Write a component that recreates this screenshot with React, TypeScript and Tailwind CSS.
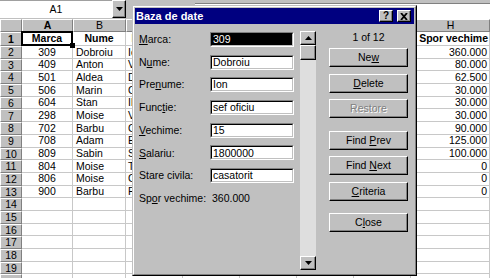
import React from 'react';

const rows = [
  ['309', 'Dobroiu', 'Ion', '360.000'],
  ['409', 'Anton', 'Vasile', '80.000'],
  ['501', 'Aldea', 'Dan', '62.500'],
  ['506', 'Marin', 'Constantin', '30.000'],
  ['604', 'Stan', 'Ilie', '30.000'],
  ['298', 'Moise', 'Victor', '30.000'],
  ['702', 'Barbu', 'Costel', '90.000'],
  ['708', 'Adam', 'Elena', '125.000'],
  ['809', 'Sabin', 'Sorin', '100.000'],
  ['804', 'Moise', 'Toma', '0'],
  ['806', 'Moise', 'Cristian', '0'],
  ['900', 'Barbu', 'Florin', '0'],
];

const font = "font-['Liberation_Sans',Arial,sans-serif]";
const hdr = 'flex items-center justify-center bg-[#c0c0c0] border-t border-l border-r border-b border-t-white border-l-white border-r-[#808080] border-b-[#808080] overflow-hidden';
const cell = 'flex items-center bg-white border-r border-b border-[#c8c8c8] overflow-hidden whitespace-nowrap';
const raised = 'border border-t-white border-l-white border-r-black border-b-black bg-[#c0c0c0] shadow-[inset_-1px_-1px_0_#808080]';

const Tri = ({ down }: { down?: boolean }) => (
  <svg width="7" height="4" viewBox="0 0 7 4">
    <polygon points={down ? '0,0 7,0 3.5,4' : '0,4 7,4 3.5,0'} fill="#000" />
  </svg>
);

const U = ({ c }: { c: string }) => <span className="underline underline-offset-[1px]">{c}</span>;

const Btn = ({ children, dim, className = '' }: { children: React.ReactNode; dim?: boolean; className?: string }) => (
  <div className={`flex h-[19px] w-full items-center justify-center ${raised} ${className} ${dim ? 'text-[#808080] [text-shadow:1px_1px_0_#fff]' : 'text-black'}`}>
    <span className="whitespace-pre">{children}</span>
  </div>
);

const fields: [React.ReactNode, string][] = [
  [<><U c="M" />arca:</>, '309'],
  [<>N<U c="u" />me:</>, 'Dobroiu'],
  [<>Pre<U c="n" />ume:</>, 'Ion'],
  [<>Func<U c="t" />ie:</>, 'sef oficiu'],
  [<><U c="V" />echime:</>, '15'],
  [<><U c="S" />alariu:</>, '1800000'],
  [<>Stare civila:</>, 'casatorit'],
];

function Grid() {
  const cols = 'grid grid-cols-[22px_51px_53px_57px_57px_57px_57px_57px_79px]';
  const letters = ['A', 'B', 'C', 'D', 'E', 'F', 'G', 'H'];
  return (
    <div className="flex flex-col">
      <div className={`${cols} h-[13px]`}>
        <div className={hdr} />
        {letters.map((l) => (
          <div key={l} className={`${hdr} ${l === 'A' ? 'font-bold' : ''}`}>{l}</div>
        ))}
      </div>
      <div className={`${cols} h-[14px] font-bold`}>
        <div className={`${hdr} font-bold`}>1</div>
        <div className="relative flex items-center justify-center bg-white border-r border-b border-[#c8c8c8]">
          Marca
          <div className="absolute inset-[-1px] border-2 border-black" />
          <div className="absolute right-[-3px] bottom-[-3px] h-[5px] w-[5px] bg-black" />
        </div>
        <div className={`${cell} justify-center`}>Nume</div>
        <div className={`${cell} justify-center`}>Prenume</div>
        <div className={cell} />
        <div className={cell} />
        <div className={cell} />
        <div className={cell} />
        <div className={`${cell} justify-end pr-[1px] overflow-visible`}>Spor vechime</div>
      </div>
      {Array.from({ length: 19 }).map((_, i) => {
        const r = rows[i];
        return (
          <div key={i} className={`${cols} h-[12.7px]`}>
            <div className={hdr}>{i < 18 ? i + 2 : ''}</div>
            <div className={`${cell} justify-center`}>{r?.[0]}</div>
            <div className={`${cell} pl-[3px]`}>{r?.[1]}</div>
            <div className={`${cell} pl-[2px]`}>{r?.[2]}</div>
            <div className={cell} />
            <div className={cell} />
            <div className={cell} />
            <div className={cell} />
            <div className={`${cell} justify-end pr-[2px]`}>{r?.[3]}</div>
          </div>
        );
      })}
    </div>
  );
}

function Dialog() {
  return (
    <div className="absolute left-[132px] top-[5px] h-[271px] w-[285px] border border-t-[#c0c0c0] border-l-[#c0c0c0] border-r-black border-b-black bg-[#c0c0c0]">
      <div className="h-full border border-t-white border-l-white border-r-[#808080] border-b-[#808080] p-px">
        <div className="flex h-[16px] items-center justify-between bg-[#000080] pl-[1px] pr-[3px]">
          <span className="text-[11px] font-bold text-white">Baza de date</span>
          <div className="flex gap-[4px]">
            <div className={`flex h-[12px] w-[14px] items-center justify-center text-[10px] font-bold leading-none ${raised}`}>?</div>
            <div className={`flex h-[12px] w-[14px] items-center justify-center ${raised}`}>
              <svg width="8" height="7" viewBox="0 0 8 7">
                <path d="M1 0 L7 7 M7 0 L1 7" stroke="#000" strokeWidth="1.8" />
              </svg>
            </div>
          </div>
        </div>
        <div className="flex items-start pl-[4px] pt-[4px]">
          <div className="flex w-[155px] flex-col">
            {fields.map(([label, val], i) => (
              <div key={i} className="flex h-[22.7px] items-center">
                <div className="w-[71px]">{label}</div>
                <div className="h-[15px] w-[84px] border border-t-[#808080] border-l-[#808080] border-r-white border-b-white">
                  <div className={`flex h-full items-center border border-t-black border-l-black border-r-[#c0c0c0] border-b-[#c0c0c0] pl-[1px] ${i === 0 ? 'bg-black text-white' : 'bg-white'}`}>
                    {val}
                  </div>
                </div>
              </div>
            ))}
            <div className="flex h-[22.7px] items-center">
              <div className="w-[73px]">Sp<U c="o" />r vechime:</div>
              <div>360.000</div>
            </div>
          </div>
          <div className="ml-[6px] mt-[3px] flex h-[239px] w-[16px] flex-col">
            <div className={`flex h-[14px] items-center justify-center ${raised}`}><Tri /></div>
            <div className={`h-[15px] ${raised}`} />
            <div className="flex-1 bg-[#dedede]" />
            <div className={`flex h-[14px] items-center justify-center ${raised}`}><Tri down /></div>
          </div>
          <div className="ml-[13px] mt-[3px] flex w-[79px] flex-col">
            <div className="flex h-[13px] items-center justify-center">1 of 12</div>
            <Btn className="mt-[4px]">Ne<U c="w" /></Btn>
            <Btn className="mt-[6.5px]"><U c="D" />elete</Btn>
            <Btn className="mt-[6.5px]" dim>Restore</Btn>
            <Btn className="mt-[12.5px]">Find <U c="P" />rev</Btn>
            <Btn className="mt-[6.5px]">Find <U c="N" />ext</Btn>
            <Btn className="mt-[6.5px]"><U c="C" />riteria</Btn>
            <Btn className="mt-[12.5px]">C<U c="l" />ose</Btn>
          </div>
        </div>
      </div>
    </div>
  );
}

export default function App() {
  return (
    <div className={`relative h-[278px] w-[490px] overflow-hidden bg-[#c0c0c0] text-[10.5px] leading-none text-black ${font}`}>
      <div className="flex h-[19px] items-start bg-[#c0c0c0]">
        <div className="flex h-[18px] w-[112px] items-center justify-center border-t border-t-[#a0a0a0] bg-white">A1</div>
        <div className={`flex h-[18px] w-[14px] items-center justify-center ${raised}`}><Tri down /></div>
        <div className="ml-[69px] mt-[3px] h-[16px] flex-1 border-t border-t-[#808080] bg-white" />
      </div>
      <Grid />
      <Dialog />
    </div>
  );
}
